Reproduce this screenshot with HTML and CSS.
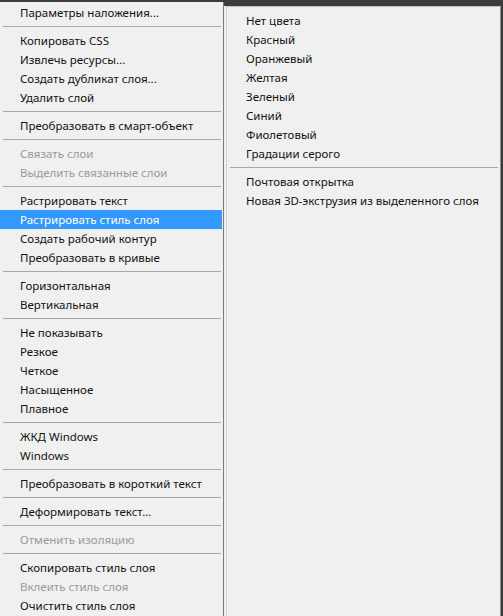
FILE: index.html
```html
<!DOCTYPE html>
<html lang="ru">
<head>
<meta charset="utf-8">
<link rel="stylesheet" href="styles.css">
</head>
<body>
<div class="screen">
  <div class="menu main">
    <div class="item">Параметры наложения...</div>
    <div class="sep"></div>
    <div class="item">Копировать CSS</div>
    <div class="item">Извлечь ресурсы...</div>
    <div class="item">Создать дубликат слоя...</div>
    <div class="item">Удалить слой</div>
    <div class="sep"></div>
    <div class="item">Преобразовать в смарт-объект</div>
    <div class="sep"></div>
    <div class="item disabled">Связать слои</div>
    <div class="item disabled">Выделить связанные слои</div>
    <div class="sep"></div>
    <div class="item">Растрировать текст</div>
    <div class="item active">Растрировать стиль слоя</div>
    <div class="item">Создать рабочий контур</div>
    <div class="item">Преобразовать в кривые</div>
    <div class="sep"></div>
    <div class="item">Горизонтальная</div>
    <div class="item">Вертикальная</div>
    <div class="sep"></div>
    <div class="item">Не показывать</div>
    <div class="item">Резкое</div>
    <div class="item">Четкое</div>
    <div class="item">Насыщенное</div>
    <div class="item">Плавное</div>
    <div class="sep"></div>
    <div class="item">ЖКД Windows</div>
    <div class="item">Windows</div>
    <div class="sep"></div>
    <div class="item">Преобразовать в короткий текст</div>
    <div class="sep"></div>
    <div class="item">Деформировать текст...</div>
    <div class="sep"></div>
    <div class="item disabled">Отменить изоляцию</div>
    <div class="sep"></div>
    <div class="item">Скопировать стиль слоя</div>
    <div class="item disabled">Вклеить стиль слоя</div>
    <div class="item">Очистить стиль слоя</div>
  </div>
  <div class="menu sub">
    <div class="item">Нет цвета</div>
    <div class="item">Красный</div>
    <div class="item">Оранжевый</div>
    <div class="item">Желтая</div>
    <div class="item">Зеленый</div>
    <div class="item">Синий</div>
    <div class="item">Фиолетовый</div>
    <div class="item">Градации серого</div>
    <div class="sep"></div>
    <div class="item">Почтовая открытка</div>
    <div class="item">Новая 3D-экструзия из выделенного слоя</div>
  </div>
</div>
</body>
</html>
```
FILE: styles.css
```css
html, body {
  margin: 0;
  padding: 0;
  background: #3c3c3c;
  width: 503px;
  height: 616px;
  overflow: hidden;
}
.screen {
  display: flex;
  align-items: flex-start;
  height: 616px;
  padding-top: 2px;
  box-sizing: border-box;
  font-family: "Noto Sans", "Liberation Sans", sans-serif;
  font-size: 11.5px;
  color: #111;
}
.menu {
  background: #f0f0f0;
  box-sizing: border-box;
  height: 100%;
}
.main {
  width: 224px;
  border-right: 1px solid #7a7a7a;
  padding-top: 1px;
}
.sub {
  margin-left: 2px;
  margin-top: 4px;
  width: 275px;
  border-left: 1px solid #d0d0d0;
  border-top: 1px solid #c0c0c0;
  border-right: 1px solid #8a8a8a;
  box-shadow: -2px 0 0 #f0f0f0;
  padding-top: 4px;
  padding-left: 1px;
}
.item {
  height: 19px;
  line-height: 19px;
  padding-left: 20px;
  white-space: nowrap;
}
.sub .item {
  padding-left: 18px;
}
.item.disabled {
  color: #9a9a9a;
}
.item.active {
  background: #3399ff;
  color: #fff;
  margin-right: 1px;
}
.sep {
  height: 1px;
  background: #a8a8a8;
  margin: 4px 2px 4px 3px;
}
.sub .sep {
  margin: 4px 2px 4px 2px;
}
```
